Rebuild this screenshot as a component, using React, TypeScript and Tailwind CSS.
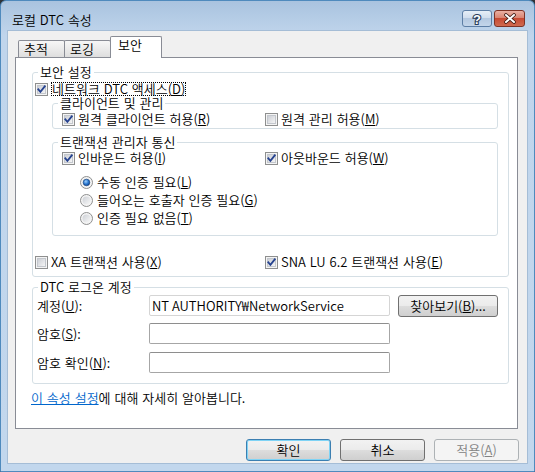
import type { ReactNode } from "react";

const BTN =
  "h-[22px] rounded-[3px] border border-[#707070] bg-[linear-gradient(to_bottom,#f2f2f2,#ebebeb_50%,#dddddd_50%,#cfcfcf)] text-center leading-[20px]";

function CheckBox({ checked = false }: { checked?: boolean }) {
  return (
    <svg width="13" height="13" viewBox="0 0 13 13" className="shrink-0">
      <defs>
        <linearGradient id="cbfill" x1="0" y1="0" x2="1" y2="1">
          <stop offset="0" stopColor="#c9ccd3" />
          <stop offset="1" stopColor="#f7f7f7" />
        </linearGradient>
      </defs>
      <rect x="0.5" y="0.5" width="12" height="12" fill="#f4f4f4" stroke="#8e8f8f" />
      <rect x="2.5" y="2.5" width="8" height="8" fill="url(#cbfill)" stroke="#c3c7cd" />
      {checked && (
        <path
          d="M3.3 6.3 L5.4 8.8 L9.8 3.3"
          fill="none"
          stroke="#25428f"
          strokeWidth="1.8"
          strokeLinecap="square"
        />
      )}
    </svg>
  );
}

function Radio({ checked = false }: { checked?: boolean }) {
  return (
    <svg width="13" height="13" viewBox="0 0 13 13" className="shrink-0">
      <defs>
        <linearGradient id="rdfill" x1="0" y1="0" x2="1" y2="1">
          <stop offset="0" stopColor="#cdd0d6" />
          <stop offset="1" stopColor="#f8f8f8" />
        </linearGradient>
        <radialGradient id="rddot" cx="0.4" cy="0.35" r="0.7">
          <stop offset="0" stopColor="#9fd0fb" />
          <stop offset="0.55" stopColor="#2a78d0" />
          <stop offset="1" stopColor="#0d3f8a" />
        </radialGradient>
      </defs>
      <circle cx="6.5" cy="6.5" r="6" fill="#f4f4f4" stroke="#8e8f8f" />
      <circle cx="6.5" cy="6.5" r="4" fill="url(#rdfill)" />
      {checked && <circle cx="6.5" cy="6.5" r="3.3" fill="url(#rddot)" stroke="#163f78" strokeWidth="0.6" />}
    </svg>
  );
}

function Check({
  checked,
  focus,
  children,
}: {
  checked?: boolean;
  focus?: boolean;
  children: ReactNode;
}) {
  return (
    <div className="flex h-[14px] items-center gap-[3px] leading-[14px]">
      <CheckBox checked={checked} />
      {focus ? (
        <span className="border border-dotted border-black leading-[12px]">{children}</span>
      ) : (
        <span>{children}</span>
      )}
    </div>
  );
}

function Option({ checked, children }: { checked?: boolean; children: ReactNode }) {
  return (
    <div className="flex h-[14px] items-center gap-[4px] leading-[14px]">
      <Radio checked={checked} />
      <span>{children}</span>
    </div>
  );
}

function Group({
  title,
  className = "",
  children,
}: {
  title: string;
  className?: string;
  children: ReactNode;
}) {
  return (
    <fieldset className={`rounded-[3px] border border-[#d5dfe5] ${className}`}>
      <legend className="ml-[5px] px-[2px] leading-[12px]">{title}</legend>
      {children}
    </fieldset>
  );
}

export default function App() {
  return (
    <div className="h-[472px] w-[535px] bg-[#2f3338] font-['Noto_Sans_CJK_KR','Noto_Sans',sans-serif] text-[13px] font-[350] text-black [word-spacing:1px]">
      <div className="flex h-full flex-col rounded-t-[6px] border border-[#4f8abd] bg-[linear-gradient(to_bottom,#a9c3df,#c0d5ec_34px,#c2d7ed)]">
        {/* title bar */}
        <div className="flex h-[30px] items-start pl-[11px] pr-[9px]">
          <span className="mt-[12px] leading-[14px]">로컬 DTC 속성</span>
          <div className="ml-auto mt-[9px] flex gap-[2px]">
            <div className="flex h-[17px] w-[30px] items-center justify-center rounded-[3px] border border-[#5d7ea5] bg-[linear-gradient(to_bottom,#e6eef7,#cfdcec_50%,#b4c8e0_50%,#c3d5ea)]">
              <svg width="12" height="14" viewBox="0 0 12 14">
                <text
                  x="6"
                  y="12"
                  textAnchor="middle"
                  fontSize="13"
                  fontWeight="bold"
                  fontFamily="Liberation Sans, sans-serif"
                  fill="#fff"
                  stroke="#2a3d5a"
                  strokeWidth="2.2"
                  paintOrder="stroke"
                >
                  ?
                </text>
              </svg>
            </div>
            <div className="flex h-[17px] w-[31px] items-center justify-center rounded-[3px] border border-[#7e3326] bg-[linear-gradient(to_bottom,#eab0a3,#d8806d_50%,#c74a33_50%,#d06a4f)]">
              <svg width="14" height="11" viewBox="0 0 14 11">
                <path d="M3 2 L11 9 M11 2 L3 9" stroke="#3c1a14" strokeWidth="3.6" strokeLinecap="round" />
                <path d="M3 2 L11 9 M11 2 L3 9" stroke="#fff" strokeWidth="2" strokeLinecap="round" />
              </svg>
            </div>
          </div>
        </div>

        {/* client area */}
        <div className="flex flex-1 px-[7px] pb-[8px]">
          <div className="flex h-[432px] w-[519px] flex-col bg-[#f0f0f0] shadow-[0_0_0_1px_#a5bdd6]">
            {/* tabs */}
            <div className="relative z-10 ml-[7px] mt-[5px] flex h-[22px] items-end pl-[3px]">
              <div className="mb-px h-[17px] w-[47px] rounded-t-[2px] border border-b-0 border-[#898c95] bg-[linear-gradient(to_bottom,#f7f7f7,#dedede)] pl-[5px] leading-[16px]">
                추적
              </div>
              <div className="-ml-px mb-px h-[17px] w-[47px] rounded-t-[2px] border border-b-0 border-[#898c95] bg-[linear-gradient(to_bottom,#f7f7f7,#dedede)] pl-[5px] leading-[16px]">
                로깅
              </div>
              <div className="-ml-px h-[22px] w-[52px] rounded-t-[2px] border border-b-0 border-[#898c95] bg-white pl-[7px] pt-[1px] leading-[14px]">
                보안
              </div>
            </div>

            {/* tab page */}
            <div className="-mt-px ml-[7px] h-[372px] w-[503px] border border-[#898c95] bg-white">
              <Group title="보안 설정" className="ml-[16px] mt-[8px] w-[477px]">
                <div className="pb-[7px] pl-[2px] pt-[4px]">
                  <Check checked focus>
                    네트워크 DTC 액세스(<u>D</u>)
                  </Check>

                  <Group title="클라이언트 및 관리" className="ml-[17px] mt-[1px] w-[446px]">
                    <div className="flex pb-[2px] pl-[9px] pt-[3px]">
                      <div className="w-[203px]">
                        <Check checked>
                          원격 클라이언트 허용(<u>R</u>)
                        </Check>
                      </div>
                      <Check>
                        원격 관리 허용(<u>M</u>)
                      </Check>
                    </div>
                  </Group>

                  <Group title="트랜잭션 관리자 통신" className="ml-[17px] mt-[7px] w-[446px]">
                    <div className="pb-[10px] pl-[9px] pt-[3px]">
                      <div className="flex">
                        <div className="w-[203px]">
                          <Check checked>
                            인바운드 허용(<u>I</u>)
                          </Check>
                        </div>
                        <Check checked>
                          아웃바운드 허용(<u>W</u>)
                        </Check>
                      </div>
                      <div className="ml-[18px] mt-[10px] flex flex-col gap-[4px]">
                        <Option checked>
                          수동 인증 필요(<u>L</u>)
                        </Option>
                        <Option>
                          들어오는 호출자 인증 필요(<u>G</u>)
                        </Option>
                        <Option>
                          인증 필요 없음(<u>T</u>)
                        </Option>
                      </div>
                    </div>
                  </Group>

                  <div className="mt-[19px] flex">
                    <div className="w-[230px]">
                      <Check>
                        XA 트랜잭션 사용(<u>X</u>)
                      </Check>
                    </div>
                    <Check checked>
                      SNA LU 6.2 트랜잭션 사용(<u>E</u>)
                    </Check>
                  </div>
                </div>
              </Group>

              <Group title="DTC 로그온 계정" className="ml-[16px] mt-[4px] w-[477px]">
                <div className="pb-[10px] pl-[4px] pt-[2px]">
                  <div className="flex h-[22px] items-start">
                    <span className="w-[112px] pt-[4px] leading-[14px]">
                      계정(<u>U</u>):
                    </span>
                    <input
                      readOnly
                      value="NT AUTHORITY₩NetworkService"
                      className="h-[21px] w-[241px] rounded-[2px] border border-[#d5d5d5] bg-white px-[2px] leading-[19px] outline-none"
                    />
                    <button className={`ml-[8px] w-[100px] ${BTN}`}>
                      찾아보기(<u>B</u>)...
                    </button>
                  </div>
                  <div className="mt-[6px] flex h-[21px] items-center">
                    <span className="w-[112px] leading-[14px]">
                      암호(<u>S</u>):
                    </span>
                    <input
                      type="password"
                      className="h-[21px] w-[241px] rounded-[2px] border border-[#a6a6a6] border-t-[#8e8e8e] bg-white outline-none"
                    />
                  </div>
                  <div className="mt-[8px] flex h-[21px] items-center">
                    <span className="w-[112px] leading-[14px]">
                      암호 확인(<u>N</u>):
                    </span>
                    <input
                      type="password"
                      className="h-[21px] w-[241px] rounded-[2px] border border-[#a6a6a6] border-t-[#8e8e8e] bg-white outline-none"
                    />
                  </div>
                </div>
              </Group>

              <p className="ml-[15px] mt-[7px] leading-[14px]">
                <a className="text-[#0066cc] underline">이 속성 설정</a>에 대해 자세히 알아봅니다.
              </p>
            </div>

            {/* dialog buttons */}
            <div className="mt-[10px] flex justify-end gap-[9px] pr-[8px]">
              <button className="h-[22px] w-[85px] rounded-[3px] border border-[#3c7fb1] bg-[linear-gradient(to_bottom,#f2f2f2,#ebebeb_50%,#dddddd_50%,#cfcfcf)] text-center leading-[20px] shadow-[inset_0_0_0_1px_#7fd3f5]">
                확인
              </button>
              <button className={`w-[85px] ${BTN}`}>취소</button>
              <button className="h-[22px] w-[85px] rounded-[3px] border border-[#adb2b5] bg-[#f4f4f4] text-center leading-[20px] text-[#838383]">
                적용(<u>A</u>)
              </button>
            </div>
          </div>
        </div>
      </div>
    </div>
  );
}
